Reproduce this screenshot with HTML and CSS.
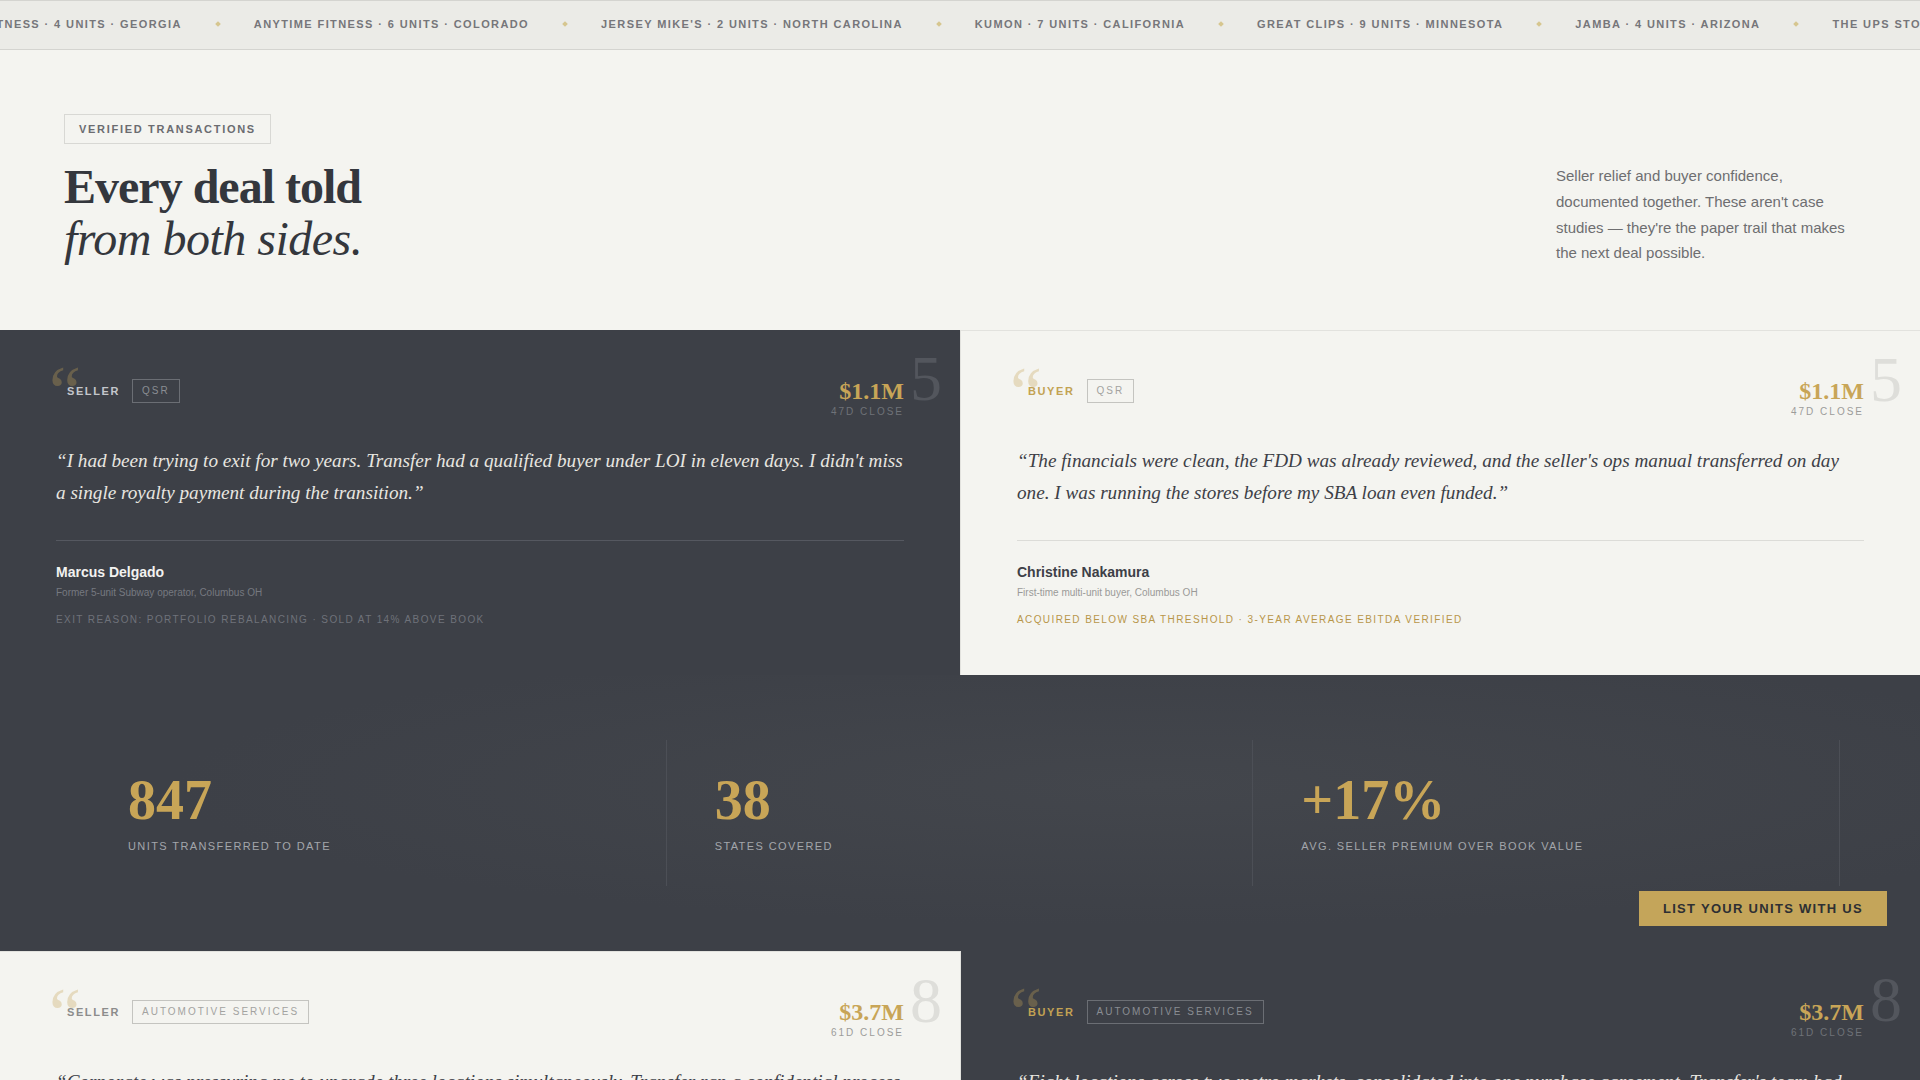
FILE: index.html
```html
<!DOCTYPE html>
<html lang="en">
<head>
    <meta charset="UTF-8">
    <meta name="viewport" content="width=device-width, initial-scale=1.0">
    <title>Transfer - Verified Transactions</title>
    <link rel="stylesheet" href="styles.css">
</head>
<body>

    <!-- Deal ticker -->
    <div class="ticker">
        <div class="ticker-track">
            <span class="tick">Planet Fitness · 4 units · Georgia</span><span class="tick-dot"></span>
            <span class="tick">Anytime Fitness · 6 units · Colorado</span><span class="tick-dot"></span>
            <span class="tick">Jersey Mike's · 2 units · North Carolina</span><span class="tick-dot"></span>
            <span class="tick">Kumon · 7 units · California</span><span class="tick-dot"></span>
            <span class="tick">Great Clips · 9 units · Minnesota</span><span class="tick-dot"></span>
            <span class="tick">Jamba · 4 units · Arizona</span><span class="tick-dot"></span>
            <span class="tick">The UPS Store · 3 units · Texas</span><span class="tick-dot"></span>
        </div>
    </div>

    <!-- Intro -->
    <section class="hero">
        <div class="hero-left">
            <span class="badge">Verified Transactions</span>
            <h1>Every deal told<br><em>from both sides.</em></h1>
        </div>
        <p class="hero-note">Seller relief and buyer confidence, documented together. These aren't case studies — they're the paper trail that makes the next deal possible.</p>
    </section>

    <!-- Deal 1 -->
    <section class="pair">
        <article class="card dark">
            <span class="qmark">&ldquo;</span>
            <span class="ghost">5</span>
            <div class="card-head">
                <div class="card-tags">
                    <span class="role">Seller</span>
                    <span class="tag">QSR</span>
                </div>
                <div class="deal">
                    <div class="price">$1.1M</div>
                    <div class="close">47D close</div>
                </div>
            </div>
            <blockquote>&ldquo;I had been trying to exit for two years. Transfer had a qualified buyer under LOI in eleven days. I didn't miss a single royalty payment during the transition.&rdquo;</blockquote>
            <div class="card-foot">
                <div class="name">Marcus Delgado</div>
                <div class="who">Former 5-unit Subway operator, Columbus OH</div>
                <div class="note">Exit reason: portfolio rebalancing · Sold at 14% above book</div>
            </div>
        </article>
        <article class="card light">
            <span class="qmark">&ldquo;</span>
            <span class="ghost">5</span>
            <div class="card-head">
                <div class="card-tags">
                    <span class="role buyer">Buyer</span>
                    <span class="tag">QSR</span>
                </div>
                <div class="deal">
                    <div class="price">$1.1M</div>
                    <div class="close">47D close</div>
                </div>
            </div>
            <blockquote>&ldquo;The financials were clean, the FDD was already reviewed, and the seller's ops manual transferred on day one. I was running the stores before my SBA loan even funded.&rdquo;</blockquote>
            <div class="card-foot">
                <div class="name">Christine Nakamura</div>
                <div class="who">First-time multi-unit buyer, Columbus OH</div>
                <div class="note">Acquired below SBA threshold · 3-year average EBITDA verified</div>
            </div>
        </article>
    </section>

    <!-- Numbers -->
    <section class="stats">
        <div class="stat-grid">
            <div class="stat">
                <div class="stat-num">847</div>
                <div class="stat-label">Units transferred to date</div>
            </div>
            <div class="stat">
                <div class="stat-num">38</div>
                <div class="stat-label">States covered</div>
            </div>
            <div class="stat">
                <div class="stat-num">+17%</div>
                <div class="stat-label">Avg. seller premium over book value</div>
            </div>
        </div>
        <a href="#" class="cta">List your units with us</a>
    </section>

    <!-- Deal 2 -->
    <section class="pair">
        <article class="card light">
            <span class="qmark">&ldquo;</span>
            <span class="ghost">8</span>
            <div class="card-head">
                <div class="card-tags">
                    <span class="role">Seller</span>
                    <span class="tag">Automotive Services</span>
                </div>
                <div class="deal">
                    <div class="price">$3.7M</div>
                    <div class="close">61D close</div>
                </div>
            </div>
            <blockquote>&ldquo;Corporate was pressuring me to upgrade three locations simultaneously. Transfer ran a confidential process and found a group that already had the capital plan approved.&rdquo;</blockquote>
            <div class="card-foot">
                <div class="name">Dale Hutchins</div>
                <div class="who">Former 8-unit Jiffy Lube operator, Dayton OH</div>
                <div class="note">Exit reason: capex requirement · Closed in 61 days</div>
            </div>
        </article>
        <article class="card dark">
            <span class="qmark">&ldquo;</span>
            <span class="ghost">8</span>
            <div class="card-head">
                <div class="card-tags">
                    <span class="role buyer">Buyer</span>
                    <span class="tag">Automotive Services</span>
                </div>
                <div class="deal">
                    <div class="price">$3.7M</div>
                    <div class="close">61D close</div>
                </div>
            </div>
            <blockquote>&ldquo;Eight locations across two metro markets, consolidated into one purchase agreement. Transfer's team had the landlord consents lined up before we signed.&rdquo;</blockquote>
            <div class="card-foot">
                <div class="name">Priya Raman</div>
                <div class="who">Multi-brand operator, Cincinnati OH</div>
                <div class="note">Two markets · One closing</div>
            </div>
        </article>
    </section>

</body>
</html>
```

FILE: styles.css
```css
body {
    font-family: "Liberation Sans", Arial, sans-serif;
    margin: 0;
    padding: 0;
    background-color: #f4f4f0;
    color: #3d4047;
}

/* ticker */
.ticker {
    height: 48px;
    background-color: #ebebe7;
    border-top: 1px solid #d4d4d0;
    border-bottom: 1px solid #d4d4d0;
    overflow: hidden;
    display: flex;
    align-items: center;
}
.ticker-track {
    display: flex;
    align-items: center;
    white-space: nowrap;
    margin-left: -73px;
    margin-top: -2px;
}
.tick {
    font-size: 11px;
    font-weight: bold;
    letter-spacing: 1.4px;
    text-transform: uppercase;
    color: #76767a;
}
.tick-dot {
    width: 4px;
    height: 4px;
    margin: 0 34px;
    background-color: #d6c68f;
    transform: rotate(45deg);
}

/* hero */
.hero {
    display: flex;
    justify-content: space-between;
    align-items: flex-end;
    padding: 64px 64px 65px;
}
.badge {
    display: inline-block;
    font-size: 11px;
    font-weight: bold;
    letter-spacing: 1.7px;
    text-transform: uppercase;
    color: #6b6c70;
    border: 1px solid #d8d8d4;
    padding: 8px 14px;
    margin-bottom: 17px;
}
.hero h1 {
    font-family: "Liberation Serif", "Times New Roman", serif;
    font-size: 48px;
    line-height: 52px;
    font-weight: bold;
    letter-spacing: -1px;
    color: #34373d;
    margin: 0;
}
.hero h1 em {
    font-weight: normal;
    letter-spacing: -0.5px;
}
.hero-note {
    width: 300px;
    margin: 0 0 -1px;
    font-size: 15px;
    line-height: 25.7px;
    color: #6e6e70;
}

/* testimonial cards */
.pair {
    display: grid;
    grid-template-columns: 1fr 1fr;
}
.card {
    position: relative;
    padding: 48px 56px;
}
.card.dark {
    background-color: #3d4047;
    color: #e8e6e0;
    padding-top: 49px;
}
.card.light {
    background-color: #f4f4f0;
    color: #3d4047;
    border-top: 1px solid #e2e2de;
}
.pair .card + .card {
    border-left: 1px solid #e2e2de;
}
.qmark {
    position: absolute;
    left: 49px;
    top: 26px;
    font-family: "Liberation Serif", serif;
    font-size: 72px;
    line-height: 1;
    color: rgba(200, 165, 87, 0.32);
}
.ghost {
    position: absolute;
    right: 18px;
    top: 17px;
    font-family: "Liberation Serif", serif;
    font-size: 64px;
    line-height: 1;
}
.dark .ghost {
    color: #53565d;
}
.light .ghost {
    color: #dededa;
}
.card-head {
    position: relative;
    display: flex;
    justify-content: space-between;
    align-items: flex-start;
    margin-bottom: 26px;
}
.card-tags {
    display: flex;
    align-items: center;
    gap: 12px;
    padding-left: 11px;
}
.role {
    font-size: 11px;
    font-weight: bold;
    letter-spacing: 1.6px;
    text-transform: uppercase;
}
.dark .role {
    color: #c3c6cb;
}
.light .role {
    color: #8c8c8c;
}
.role.buyer {
    color: #c2a253;
}
.tag {
    font-size: 10px;
    letter-spacing: 2px;
    text-transform: uppercase;
    height: 22px;
    line-height: 22px;
    padding: 0 9px;
}
.dark .tag {
    color: #8a8d93;
    border: 1px solid #6b6e74;
}
.light .tag {
    color: #a3a3a0;
    border: 1px solid #c4c4c0;
}
.deal {
    text-align: right;
}
.price {
    font-family: "Liberation Serif", serif;
    font-size: 24px;
    line-height: 24px;
    font-weight: bold;
    color: #c8a557;
}
.close {
    font-size: 10px;
    line-height: 14px;
    letter-spacing: 2px;
    text-transform: uppercase;
    margin-top: 2px;
}
.dark .close {
    color: #6f7278;
}
.light .close {
    color: #9c9c9a;
}
blockquote {
    margin: 0 0 31px;
    font-family: "Liberation Serif", serif;
    font-style: italic;
    font-size: 19.2px;
    line-height: 32px;
}
.card-foot {
    padding-top: 22px;
}
.dark .card-foot {
    border-top: 1px solid #555860;
}
.light .card-foot {
    border-top: 1px solid #dcdcd8;
}
.name {
    font-size: 14px;
    line-height: 18px;
    font-weight: bold;
}
.dark .name {
    color: #f2f2f0;
}
.who {
    font-size: 10px;
    line-height: 14px;
    margin-top: 5px;
}
.dark .who {
    color: #767980;
}
.light .who {
    color: #9a9a98;
}
.note {
    font-size: 10px;
    line-height: 14px;
    letter-spacing: 1.4px;
    text-transform: uppercase;
    margin-top: 13px;
}
.dark .note {
    color: #6f727a;
}
.light .note {
    color: #b8964a;
}

/* stats band */
.stats {
    position: relative;
    background-color: #3d4047;
    background-image: radial-gradient(ellipse at 60% 40%, #43464c 0%, #3d4047 60%);
    padding: 65px 80px 65px;
}
.stat-grid {
    display: grid;
    grid-template-columns: 1fr 1fr 1fr;
}
.stat {
    padding: 32px 48px;
    border-right: 1px solid #4c4f56;
}
.stat-num {
    font-family: "Liberation Serif", serif;
    font-size: 56px;
    line-height: 56px;
    font-weight: bold;
    color: #c8a557;
}
.stat-label {
    margin-top: 11px;
    font-size: 11px;
    line-height: 15px;
    letter-spacing: 1.4px;
    text-transform: uppercase;
    color: #a3a6ab;
}
.cta {
    position: absolute;
    right: 33px;
    bottom: 25px;
    background-color: #c4a55a;
    color: #2d2f33;
    font-size: 13px;
    font-weight: bold;
    letter-spacing: 1.3px;
    text-transform: uppercase;
    text-decoration: none;
    height: 35px;
    line-height: 35px;
    padding: 0 24px;
}
```
